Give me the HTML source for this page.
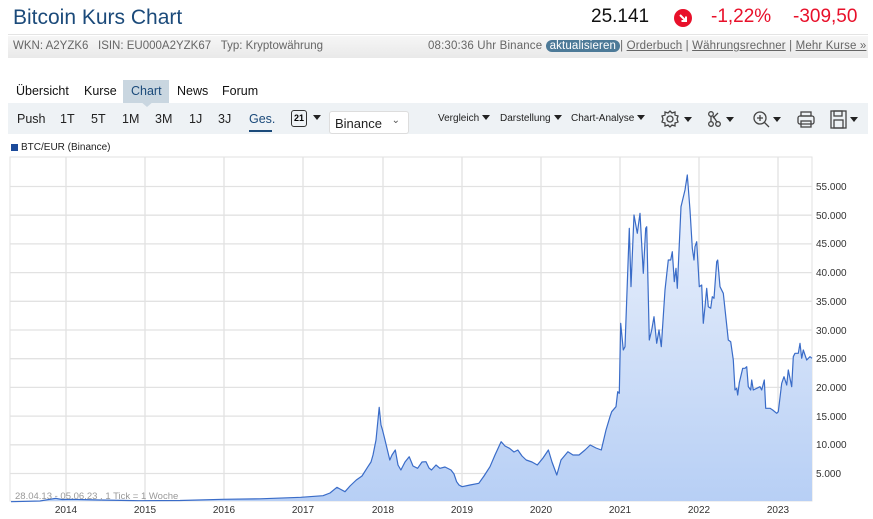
<!DOCTYPE html>
<html><head><meta charset="utf-8"><style>
*{margin:0;padding:0;box-sizing:border-box}
body{width:873px;height:519px;overflow:hidden;background:#fff;font-family:"Liberation Sans","DejaVu Sans",sans-serif;position:relative}
.a{position:absolute;white-space:nowrap}
.tb{font-size:12px;color:#222}
.dd::after{content:"";display:inline-block;margin-left:3px;border-left:4px solid transparent;border-right:4px solid transparent;border-top:5px solid #222;vertical-align:1px}
</style></head><body>
<div class="a" style="left:13px;top:6px;font-size:21px;color:#1b4a7a">Bitcoin Kurs Chart</div>
<div class="a" style="left:591px;top:6px;font-size:19px;color:#111">25.141</div>
<div class="a" style="left:674px;top:9px;width:18px;height:18px;border-radius:50%;background:#e8102a"><svg width="18" height="18"><path d="M6 6 L12 12 M12 7.5 V12 H7.5" stroke="#fff" stroke-width="2" fill="none"/></svg></div>
<div class="a" style="left:711px;top:6px;font-size:19px;color:#e8102a">-1,22%</div>
<div class="a" style="left:793px;top:6px;font-size:19px;color:#e8102a">-309,50</div>
<div class="a" style="left:8px;top:34px;width:860px;height:1px;background:#e4e4e4"></div>
<div class="a" style="left:8px;top:36px;width:860px;height:22px;background:linear-gradient(#f6f6f6,#e9e9e9)"></div>
<div class="a" style="left:13px;top:40px;font-size:11.5px;color:#666">WKN: A2YZK6 &nbsp;&nbsp;ISIN: EU000A2YZK67 &nbsp;&nbsp;Typ: Kryptowährung</div>
<div class="a" style="left:428px;top:40px;font-size:11.5px;color:#666;letter-spacing:0.15px">08:30:36 Uhr Binance <span style="background:#4d7a98;color:#fff;border-radius:8px;padding:0 4px">aktualisieren</span>| <u>Orderbuch</u> | <u>Währungsrechner</u> | <u>Mehr Kurse »</u></div>
<div class="a" style="left:123px;top:80px;width:46px;height:23px;background:#c9d6e0"></div>
<div class="a" style="left:16px;top:84px;font-size:12.5px;color:#111">Übersicht</div>
<div class="a" style="left:84px;top:84px;font-size:12.5px;color:#111">Kurse</div>
<div class="a" style="left:131px;top:84px;font-size:12.5px;color:#1b4a7a">Chart</div>
<div class="a" style="left:177px;top:84px;font-size:12.5px;color:#111">News</div>
<div class="a" style="left:222px;top:84px;font-size:12.5px;color:#111">Forum</div>
<div class="a" style="left:8px;top:103px;width:860px;height:31px;background:#eef2f5"></div>
<div class="a" style="left:140px;top:101px;width:0;height:0;border-left:7px solid transparent;border-right:7px solid transparent;border-top:6px solid #c9d6e0"></div>
<div class="a tb" style="left:17px;top:112px;font-size:12.5px">Push</div>
<div class="a tb" style="left:60px;top:112px;font-size:12.5px">1T</div>
<div class="a tb" style="left:91px;top:112px;font-size:12.5px">5T</div>
<div class="a tb" style="left:122px;top:112px;font-size:12.5px">1M</div>
<div class="a tb" style="left:155px;top:112px;font-size:12.5px">3M</div>
<div class="a tb" style="left:189px;top:112px;font-size:12.5px">1J</div>
<div class="a tb" style="left:218px;top:112px;font-size:12.5px">3J</div>
<div class="a tb" style="left:249px;top:112px;font-size:12.5px;color:#1b4a7a">Ges.</div>
<div class="a" style="left:249px;top:130px;width:23px;height:2px;background:#1b4a7a"></div>
<div class="a" style="left:291px;top:110px;width:16px;height:17px;border:1.5px solid #333;border-radius:3px;font-size:9px;font-weight:bold;text-align:center;line-height:15px">21</div>
<div class="a dd" style="left:310px;top:115px;font-size:1px"></div>
<div class="a" style="left:329px;top:111px;width:80px;height:23px;background:#fff;border:1px solid #ddd;border-radius:3px;font-size:13px;color:#222;padding:4px 0 0 5px">Binance<span style="position:absolute;right:8px;top:3px;font-size:10px;color:#555">⌄</span></div>
<div class="a tb dd" style="left:438px;top:113px;font-size:10px">Vergleich</div>
<div class="a tb dd" style="left:500px;top:113px;font-size:10px">Darstellung</div>
<div class="a tb dd" style="left:571px;top:113px;font-size:10px">Chart-Analyse</div>
<svg class="a" style="left:660px;top:108px" width="210" height="22" fill="none" stroke="#444" stroke-width="1.3">
<circle cx="10" cy="11" r="3"/><path d="M10 3 l2 2 3-1 0 3 3 1 -1 3 1 3 -3 1 0 3 -3-1 -2 2 -2-2 -3 1 0-3 -3-1 1-3 -1-3 3-1 0-3 3 1z"/>
<path d="M24 9h8l-4 5z" fill="#222" stroke="none"/>
<circle cx="51" cy="6" r="2.3"/><circle cx="51" cy="16" r="2.3"/><circle cx="58" cy="16" r="2.3"/><path d="M51 8v6M53 8l4 6M58 5l-5 5"/>
<path d="M66 9h8l-4 5z" fill="#222" stroke="none"/>
<circle cx="100" cy="10" r="6"/><path d="M104 14l5 5M97 10h6M100 7v6"/>
<path d="M113 9h8l-4 5z" fill="#222" stroke="none"/>
<rect x="138" y="8" width="16" height="8" rx="2"/><rect x="141" y="4" width="10" height="4"/><rect x="141" y="13" width="10" height="6"/>
<rect x="171" y="3" width="15" height="17"/><rect x="174" y="3" width="8" height="5"/><rect x="174" y="12" width="9" height="8"/>
<path d="M190 9h8l-4 5z" fill="#222" stroke="none"/>
</svg>
<div class="a" style="left:11px;top:144px;width:7px;height:7px;background:#1b4a9a"></div>
<div class="a" style="left:21px;top:142px;font-size:10px;color:#222">BTC/EUR (Binance)</div>
<svg class="a" style="left:0;top:155px" width="873" height="364">
<defs><linearGradient id="g" x1="0" y1="0" x2="0" y2="1"><stop offset="0" stop-color="#eef3fc"/><stop offset="1" stop-color="#b7cff5"/></linearGradient>
<path id="ln" d="M11 501.7 L40 501 55.7 498.3 62 499.5 72.4 499.3 100 500 139 500.7 180 500.5 222.7 499.3 260 498.8 300.7 497.3 323 495.7 330 493 336.9 487.3 340 489 345 491.7 350 486 356.3 480 362 476 367.5 467.3 371 462 373 455 376 440 379.2 407.3 381 425 382.5 430 385 440 389.8 460 392 455 395.3 450 398 465 400.9 470 405 462 409.2 456.7 413 466 417.6 468.3 422 462 426 461.7 429 468 431.5 470 436 465 439.9 468.3 445 467 451 470 454 474 456.6 481.7 459 485 462.1 486.7 470 485 478.8 483.3 484 476 490 466.7 495 455 501.1 441.7 505 446 509.5 448.3 514 452 517.8 450 522 456 526.2 460 532 462 537.3 465 543 458 548.4 450 552 462 556.8 475 561 460 567.9 451.7 573 455 579 455 585 450 590.2 445 596 448 601.3 450 606 430 610 416.7 611.7 411.7 616 406.7 617.7 391.7 619.3 393.3 620.7 323.3 623.3 350 625 346.7 629.3 228.3 631 286.7 634 215 637.3 233.3 640 213.3 643.3 273.3 645.7 228.3 646.7 226.7 649.3 340 651.7 330 654 316.7 656.7 343.3 659 330 661.3 346.7 665 290 668.3 260 670.7 260 672.3 251.7 674.3 281.7 676 268.3 677.3 288.3 681 206.7 685 190 687.3 175 690 210 692.3 248.3 694 260 695 246.7 696.7 241.7 699.3 286.7 701.7 285 703.3 323.3 705 306.7 706.7 288.3 708.3 306.7 710.7 308.3 712.3 296.7 714 298.3 716.7 261.7 717.7 260 720 286.7 723.3 293.3 728.3 340 730.7 341.7 733.3 360 735 390 736.7 388.3 737.7 395 739.3 382.7 742.7 368.3 745 368.3 746.7 366.7 748.3 386.7 750.7 390 751.7 380 753.3 390 756.7 388.3 760 386.7 761.7 390 764.3 380 765.7 408.3 770 408.3 772.7 410 776.7 413.3 778.3 411.7 781.7 383.3 784 376.7 786.7 385 788.3 370 791.7 386.7 793.3 356.7 795 353.3 798.3 353.3 800 343.3 801.7 358.3 803.3 350 806.7 360 810 356.7 812 358.3"/>
</defs>
<g transform="translate(0,-155)">
<rect x="10" y="157" width="802" height="344" fill="#fff" stroke="#e2e2e2"/>
<g stroke="#e2e2e2" stroke-width="1.3">
<path d="M10 186.5H812M10 215.2H812M10 243.9H812M10 272.6H812M10 301.3H812M10 330H812M10 358.7H812M10 387.4H812M10 416.1H812M10 444.8H812M10 473.5H812"/>
<path d="M66 157V501M145 157V501M224 157V501M303 157V501M383 157V501M462 157V501M541 157V501M620 157V501M699 157V501M778 157V501"/>
</g>
<path fill="url(#g)" d="M11 501 L11 501.7 L40 501 55.7 498.3 62 499.5 72.4 499.3 100 500 139 500.7 180 500.5 222.7 499.3 260 498.8 300.7 497.3 323 495.7 330 493 336.9 487.3 340 489 345 491.7 350 486 356.3 480 362 476 367.5 467.3 371 462 373 455 376 440 379.2 407.3 381 425 382.5 430 385 440 389.8 460 392 455 395.3 450 398 465 400.9 470 405 462 409.2 456.7 413 466 417.6 468.3 422 462 426 461.7 429 468 431.5 470 436 465 439.9 468.3 445 467 451 470 454 474 456.6 481.7 459 485 462.1 486.7 470 485 478.8 483.3 484 476 490 466.7 495 455 501.1 441.7 505 446 509.5 448.3 514 452 517.8 450 522 456 526.2 460 532 462 537.3 465 543 458 548.4 450 552 462 556.8 475 561 460 567.9 451.7 573 455 579 455 585 450 590.2 445 596 448 601.3 450 606 430 610 416.7 611.7 411.7 616 406.7 617.7 391.7 619.3 393.3 620.7 323.3 623.3 350 625 346.7 629.3 228.3 631 286.7 634 215 637.3 233.3 640 213.3 643.3 273.3 645.7 228.3 646.7 226.7 649.3 340 651.7 330 654 316.7 656.7 343.3 659 330 661.3 346.7 665 290 668.3 260 670.7 260 672.3 251.7 674.3 281.7 676 268.3 677.3 288.3 681 206.7 685 190 687.3 175 690 210 692.3 248.3 694 260 695 246.7 696.7 241.7 699.3 286.7 701.7 285 703.3 323.3 705 306.7 706.7 288.3 708.3 306.7 710.7 308.3 712.3 296.7 714 298.3 716.7 261.7 717.7 260 720 286.7 723.3 293.3 728.3 340 730.7 341.7 733.3 360 735 390 736.7 388.3 737.7 395 739.3 382.7 742.7 368.3 745 368.3 746.7 366.7 748.3 386.7 750.7 390 751.7 380 753.3 390 756.7 388.3 760 386.7 761.7 390 764.3 380 765.7 408.3 770 408.3 772.7 410 776.7 413.3 778.3 411.7 781.7 383.3 784 376.7 786.7 385 788.3 370 791.7 386.7 793.3 356.7 795 353.3 798.3 353.3 800 343.3 801.7 358.3 803.3 350 806.7 360 810 356.7 812 358.3 L812 501Z"/>
<use href="#ln" fill="none" stroke="#3a6cc8" stroke-width="1.2" stroke-linejoin="round"/>
<g font-size="10" fill="#333" font-family="Liberation Sans,sans-serif">
<text x="816" y="190">55.000</text><text x="816" y="219">50.000</text><text x="816" y="247">45.000</text><text x="816" y="276">40.000</text><text x="816" y="305">35.000</text><text x="816" y="334">30.000</text><text x="816" y="362">25.000</text><text x="816" y="391">20.000</text><text x="816" y="420">15.000</text><text x="816" y="448">10.000</text><text x="816" y="477">5.000</text>
<g text-anchor="middle"><text x="66" y="513">2014</text><text x="145" y="513">2015</text><text x="224" y="513">2016</text><text x="303" y="513">2017</text><text x="383" y="513">2018</text><text x="462" y="513">2019</text><text x="541" y="513">2020</text><text x="620" y="513">2021</text><text x="699" y="513">2022</text><text x="778" y="513">2023</text></g>
<text x="15" y="499" fill="#999" font-size="9.5">28.04.13 - 05.06.23 , 1 Tick = 1 Woche</text>
</g></g></svg>
</body></html>
